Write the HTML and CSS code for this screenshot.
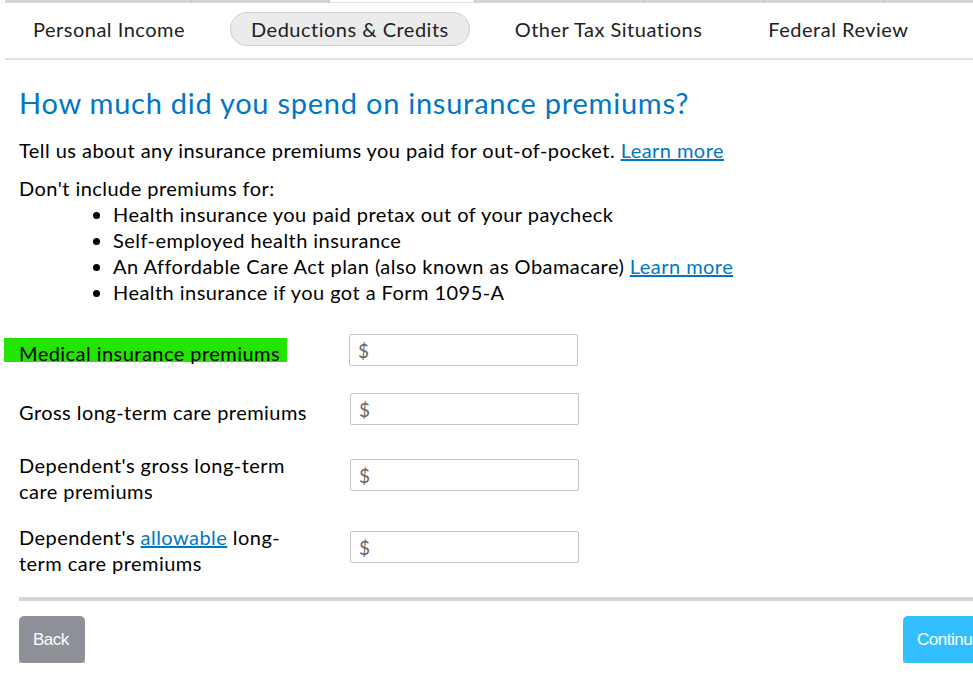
FILE: index.html
```html
<!DOCTYPE html>
<html lang="en">
<head>
    <meta charset="UTF-8">
    <meta name="viewport" content="width=device-width, initial-scale=1.0">
    <title>Insurance premiums</title>
    <link rel="stylesheet" href="styles.css">
</head>
<body>
    <div class="page">
        <!-- progress strip -->
        <ul class="steps">
            <li style="width:187px"></li>
            <li style="width:138px"></li>
            <li class="on" style="width:145px"></li>
            <li style="width:169px"></li>
            <li style="width:120px"></li>
            <li style="width:120px"></li>
            <li style="width:129px"></li>
        </ul>

        <ul class="nav">
            <li>Personal Income</li>
            <li class="active">Deductions &amp; Credits</li>
            <li>Other Tax Situations</li>
            <li>Federal Review</li>
        </ul>

        <div class="main">
            <h1>How much did you spend on insurance premiums?</h1>
            <p class="intro">Tell us about any insurance premiums you paid for out-of-pocket. <a href="">Learn more</a></p>
            <p class="note">Don't include premiums for:</p>
            <ul class="list">
                <li>Health insurance you paid pretax out of your paycheck</li>
                <li>Self-employed health insurance</li>
                <li>An Affordable Care Act plan (also known as Obamacare) <a href="">Learn more</a></li>
                <li>Health insurance if you got a Form 1095-A</li>
            </ul>

            <div class="rows">
                <div class="row">
                    <label class="mark">Medical insurance premiums</label>
                    <div class="field"><span>$</span><input type="text"></div>
                </div>
                <div class="row">
                    <label>Gross long-term care premiums</label>
                    <div class="field"><span>$</span><input type="text"></div>
                </div>
                <div class="row">
                    <label>Dependent's gross long-term care premiums</label>
                    <div class="field"><span>$</span><input type="text"></div>
                </div>
                <div class="row">
                    <label>Dependent's <a href="">allowable</a> long-term care premiums</label>
                    <div class="field"><span>$</span><input type="text"></div>
                </div>
            </div>

            <div class="foot">
                <button class="btn back">Back</button>
                <button class="btn go">Continue</button>
            </div>
        </div>
    </div>
</body>
</html>
```

FILE: styles.css
```css
html,body{
    margin: 0;
    padding: 0;
    overflow: hidden;
}
body{
    font-family: Lato, "Open Sans", sans-serif;
    color: #000;
    background: #fff;
}
ul,li,h1,p{
    margin: 0;
    padding: 0;
    list-style: none;
    font-weight: normal;
}
a{
    color: #0077c5;
    text-decoration: underline;
}
.page{
    width: 1008px;
    padding-left: 5px;
}
.steps{
    display: flex;
    height: 3px;
}
.steps li{
    height: 3px;
    background: #d6d6d6;
    border-right: 1px solid #c4c4c4;
    box-sizing: border-box;
}
.steps li.on{
    background: #fff;
    border-bottom: 1px solid #e2e2e2;
}
.nav{
    display: flex;
    align-items: center;
    height: 52px;
    padding-bottom: 3px;
    border-bottom: 2px solid #e0e0e0;
    width: 968px;
    padding-left: 7px;
    box-sizing: content-box;
}
.nav li{
    font-size: 20px;
    color: #222;
    padding: 5px 20px;
    margin-right: 24px;
    letter-spacing: 0.5px;
    border: 1px solid transparent;
    line-height: 22px;
}
.nav li.active{
    background: #ebebeb;
    border-color: #cfcfcf;
    border-radius: 18px;
}
.main{
    padding-left: 14px;
}
h1{
    color: #0077c5;
    font-size: 29px;
    letter-spacing: 0.75px;
    margin-top: 25px;
    line-height: 36px;
}
.intro,
.note,
.list li,
.row label{
    font-size: 20px;
    letter-spacing: 0.45px;
    line-height: 26px;
}
.intro{
    margin-top: 16px;
}
.note{
    margin-top: 12px;
}
.list{
    padding-left: 94px;
}
.list li{
    list-style: disc;
}
.rows{
    margin-top: 29px;
}
.row{
    display: flex;
    align-items: center;
}
.row:nth-child(1){
    margin-bottom: 27px;
}
.row:nth-child(2){
    margin-bottom: 21px;
}
.row:nth-child(3){
    margin-bottom: 14px;
}
.row label{
    width: 295px;
    margin-right: 36px;
    padding-top: 6px;
}
.row label.mark{
    background: #22e600;
    margin-left: -15px;
    padding-left: 15px;
    width: 268px;
    margin-right: 62px;
    height: 24px;
    padding-top: 0;
    line-height: 30px;
}
.field{
    display: flex;
    align-items: center;
    width: 227px;
    height: 30px;
    border: 1px solid #c4c4c4;
    border-radius: 2px;
}
.field span{
    padding-left: 8px;
    font-size: 19px;
    color: #666;
}
.field input{
    border: 0;
    outline: 0;
    flex: 1;
    font-size: 16px;
    background: transparent;
}
.foot{
    display: flex;
    justify-content: space-between;
    border-top: 4px solid #d4d6da;
    padding-top: 15px;
    margin-top: 21px;
}
.btn{
    border: 0;
    border-radius: 5px;
    color: #fff;
    font-family: "Liberation Sans", Arial, sans-serif;
    font-size: 17px;
    height: 47px;
    padding: 0 14px;
    box-shadow: 0 3px 0 #b5b5b5;
    letter-spacing: -0.5px;
    text-align: left;
}
.back{
    background: #8d9096;
    width: 66px;
}
.go{
    background: #33bfff;
    width: 110px;
}
```
